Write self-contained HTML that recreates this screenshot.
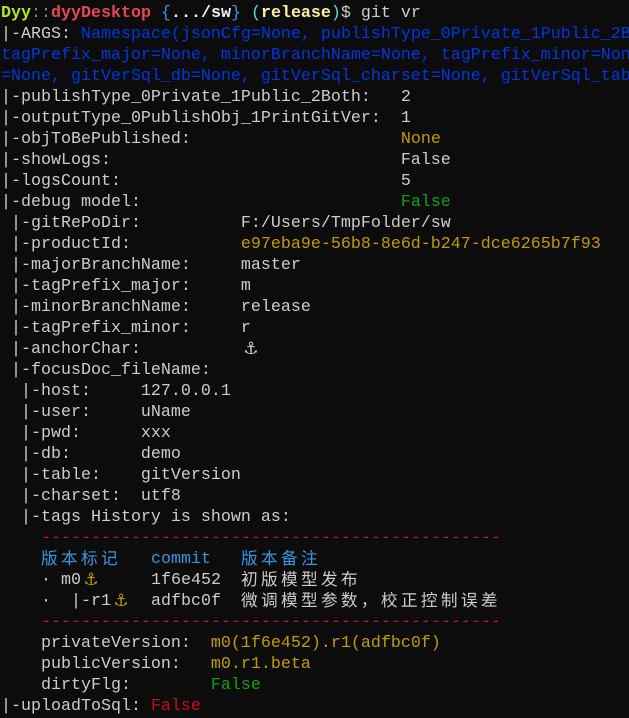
<!DOCTYPE html>
<html><head><meta charset="utf-8"><style>
html,body{margin:0;padding:0;background:#0c0c0c;width:629px;height:718px;overflow:hidden}
body{position:relative;font-family:"Liberation Mono","Noto Sans CJK SC",monospace;font-size:16.67px;color:#cccccc}
.l{position:absolute;left:1px;width:628px;overflow:hidden;white-space:pre;height:21px;line-height:21px}
.s{position:absolute;white-space:pre;line-height:21px;height:21px}
.b{color:#0037da}.y{color:#c19c00}.g{color:#13a10e}.r{color:#c50f1f}.c{color:#3a96dd}
.cjk{font-family:"Noto Sans CJK SC",sans-serif;letter-spacing:3.33px;font-size:16.67px;line-height:21px;margin-top:-2px}
.a{font-family:"DejaVu Sans",sans-serif;color:#c19c00;display:inline-block;width:20px;height:21px;line-height:21px;text-align:center;vertical-align:top;font-size:17px}
</style></head><body>
<div class="l" style="top:3px"><b style="color:#b5e61d">Dyy</b><span style="color:#888">::</span><b style="color:#e74856">dyyDesktop</b> <span style="color:#3a96dd">{</span><b style="color:#f2f2f2">.../sw</b><span style="color:#3a96dd">}</span> <span style="color:#61d6d6">(</span><b style="color:#f9f1a5">release</b><span style="color:#61d6d6">)</span>$ git vr</div>
<div class="l" style="top:24px">|-ARGS: <span class="b">Namespace(jsonCfg=None, publishType_0Private_1Public_2B</span></div>
<div class="l b" style="top:45px">tagPrefix_major=None, minorBranchName=None, tagPrefix_minor=Non</div>
<div class="l b" style="top:66px">=None, gitVerSql_db=None, gitVerSql_charset=None, gitVerSql_tab</div>
<div class="l" style="top:87px">|-publishType_0Private_1Public_2Both:   2</div>
<div class="l" style="top:108px">|-outputType_0PublishObj_1PrintGitVer:  1</div>
<div class="l" style="top:129px">|-objToBePublished:                     <span class="y">None</span></div>
<div class="l" style="top:150px">|-showLogs:                             False</div>
<div class="l" style="top:171px">|-logsCount:                            5</div>
<div class="l" style="top:192px">|-debug model:                          <span class="g">False</span></div>
<div class="l" style="top:213px"> |-gitRePoDir:          F:/Users/TmpFolder/sw</div>
<div class="l" style="top:234px"> |-productId:           <span class="y">e97eba9e-56b8-8e6d-b247-dce6265b7f93</span></div>
<div class="l" style="top:255px"> |-majorBranchName:     master</div>
<div class="l" style="top:276px"> |-tagPrefix_major:     m</div>
<div class="l" style="top:297px"> |-minorBranchName:     release</div>
<div class="l" style="top:318px"> |-tagPrefix_minor:     r</div>
<div class="l" style="top:339px"> |-anchorChar:          <span class="a" style="color:#ccc">⚓</span></div>
<div class="l" style="top:360px"> |-focusDoc_fileName:</div>
<div class="l" style="top:381px">  |-host:     127.0.0.1</div>
<div class="l" style="top:402px">  |-user:     uName</div>
<div class="l" style="top:423px">  |-pwd:      xxx</div>
<div class="l" style="top:444px">  |-db:       demo</div>
<div class="l" style="top:465px">  |-table:    gitVersion</div>
<div class="l" style="top:486px">  |-charset:  utf8</div>
<div class="l" style="top:507px">  |-tags History is shown as:</div>
<div class="l r" style="top:528px">    ----------------------------------------------</div>
<div class="s c cjk" style="top:549px;left:41px">版本标记</div>
<div class="s c" style="top:549px;left:151px">commit</div>
<div class="s c cjk" style="top:549px;left:241px">版本备注</div>
<div class="s" style="top:570px;left:41px">· m0<span class="a">⚓</span></div>
<div class="s" style="top:570px;left:151px">1f6e452</div>
<div class="s cjk" style="top:570px;left:241px">初版模型发布</div>
<div class="s" style="top:591px;left:41px">·  |-r1<span class="a">⚓</span></div>
<div class="s" style="top:591px;left:151px">adfbc0f</div>
<div class="s cjk" style="top:591px;left:241px">微调模型参数，校正控制误差</div>
<div class="l r" style="top:612px">    ----------------------------------------------</div>
<div class="l" style="top:633px">    privateVersion:  <span class="y">m0(1f6e452).r1(adfbc0f)</span></div>
<div class="l" style="top:654px">    publicVersion:   <span class="y">m0.r1.beta</span></div>
<div class="l" style="top:675px">    dirtyFlg:        <span class="g">False</span></div>
<div class="l" style="top:696px">|-uploadToSql: <span class="r">False</span></div>
</body></html>
